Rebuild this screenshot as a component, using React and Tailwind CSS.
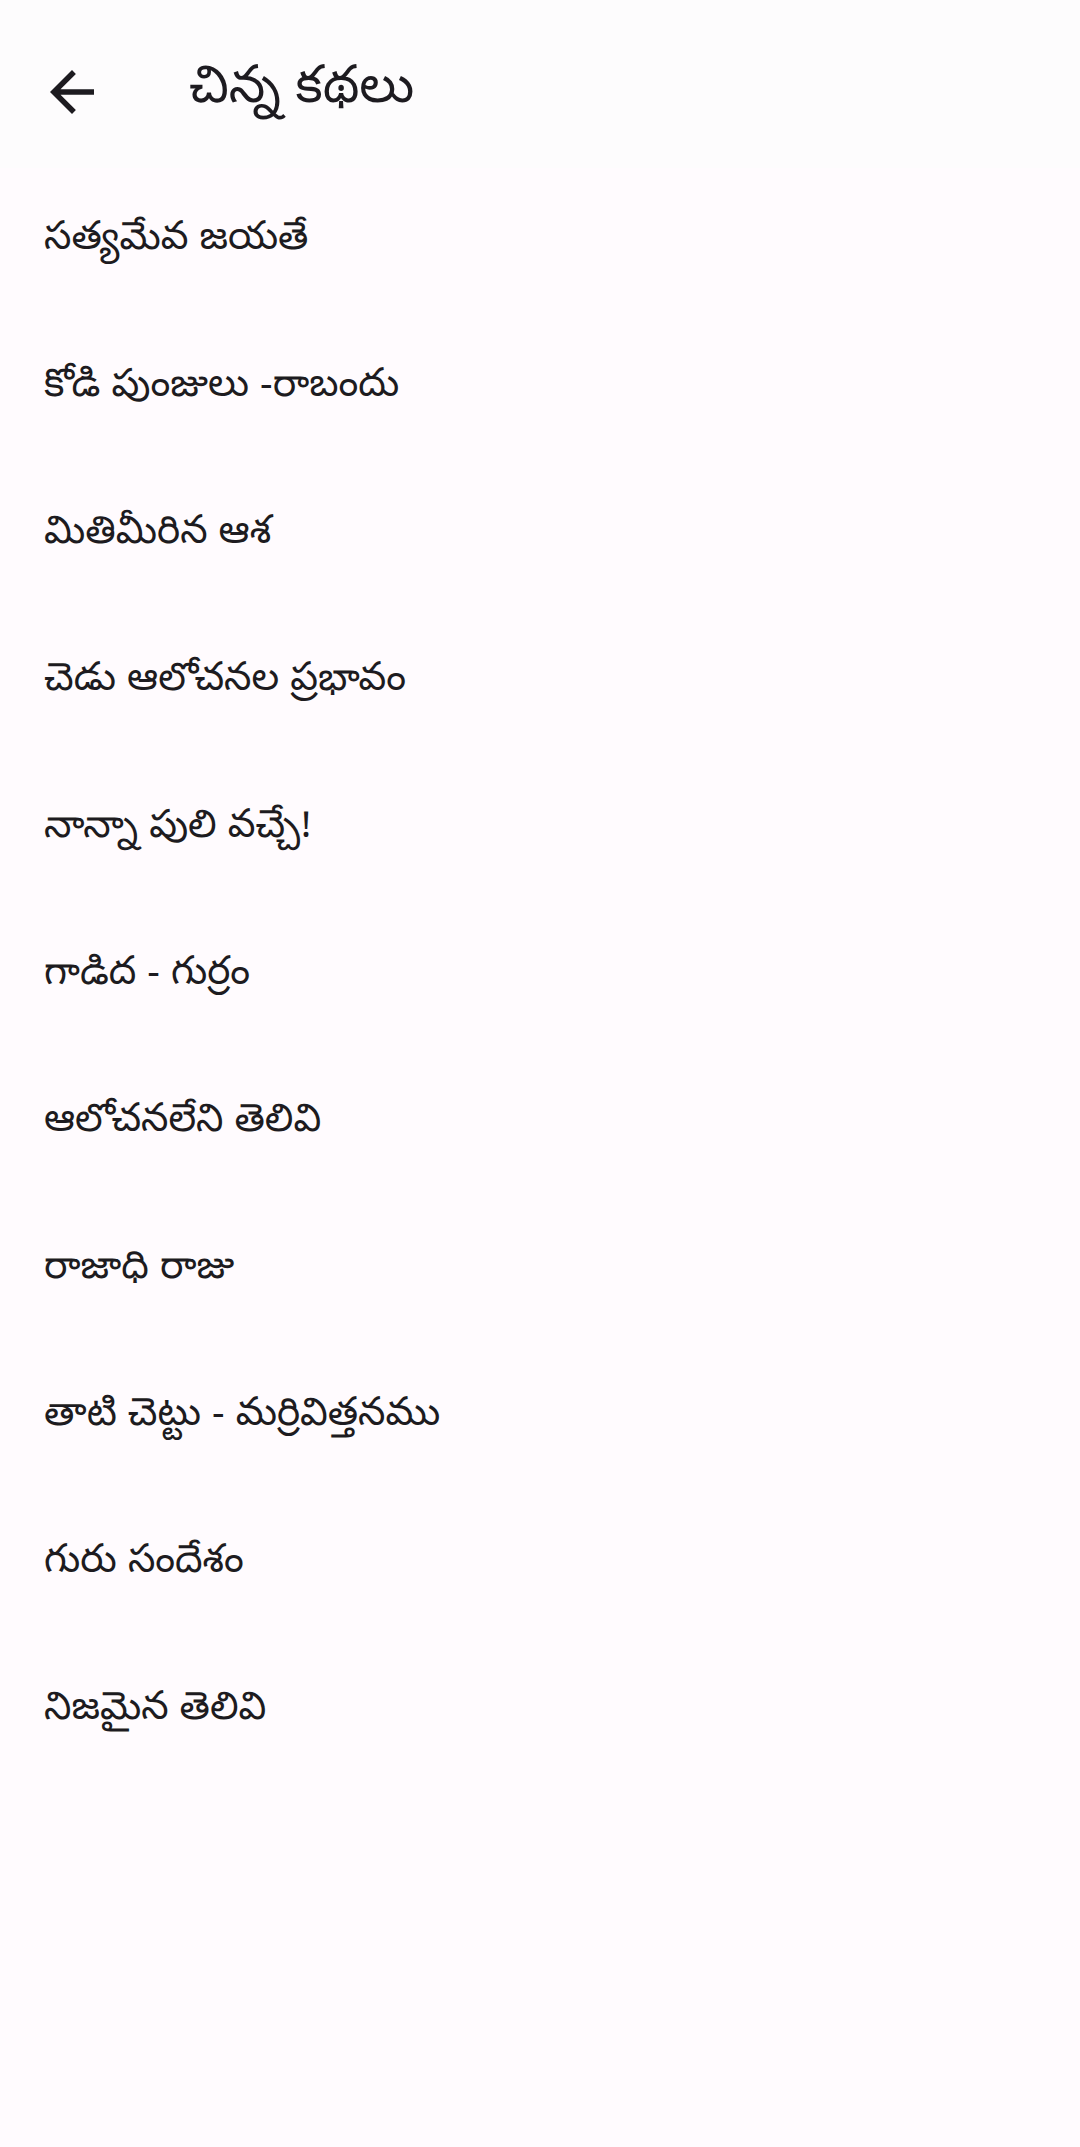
import React from "react";

const stories = [
  "సత్యమేవ జయతే",
  "కోడి పుంజులు -రాబందు",
  "మితిమీరిన ఆశ",
  "చెడు ఆలోచనల ప్రభావం",
  "నాన్నా పులి వచ్చే!",
  "గాడిద - గుర్రం",
  "ఆలోచనలేని తెలివి",
  "రాజాధి రాజు",
  "తాటి చెట్టు - మర్రివిత్తనము",
  "గురు సందేశం",
  "నిజమైన తెలివి",
];

const BackArrow = () => (
  <svg width="66" height="66" viewBox="0 0 24 24" fill="#1d1b20">
    <path d="M20 11H7.83l5.59-5.59L12 4l-8 8 8 8 1.41-1.41L7.83 13H20v-2z" />
  </svg>
);

export default function App() {
  return (
    <div
      className="w-[1080px] min-h-[2147px] bg-[#fffbfe] text-[#1d1b20]"
      style={{ fontFamily: '"Noto Sans Telugu", "Noto Sans", Roboto, sans-serif' }}
    >
      <header className="h-[168px] pt-[16px] flex items-center bg-[#fdfcfd]">
        <div className="w-[189px] flex items-center pl-[39px]">
          <BackArrow />
        </div>
        <h1 className="text-[52px] leading-none font-normal">చిన్న కథలు</h1>
      </header>

      <ul className="flex flex-col">
        {stories.map((s) => (
          <li key={s} className="h-[147px] flex items-center px-[44px] text-[39px] leading-none">
            {s}
          </li>
        ))}
      </ul>
    </div>
  );
}
